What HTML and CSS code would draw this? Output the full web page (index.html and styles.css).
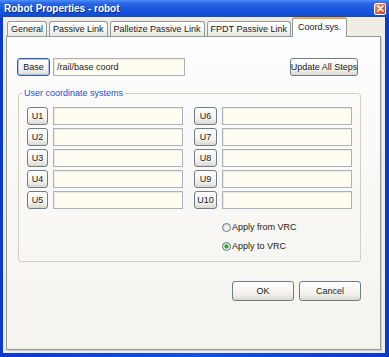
FILE: index.html
```html
<!DOCTYPE html>
<html lang="en">
<head>
  <meta charset="UTF-8" />
  <title>Robot Properties - robot</title>
  <link rel="stylesheet" href="styles.css">
</head>
<body>
  <div class="window">
    <div class="titlebar">
      <span class="title">Robot Properties - robot</span>
      <span class="close">
        <svg width="7" height="7" viewBox="0 0 7 7"><path d="M1 1L6 6M6 1L1 6" stroke="#fff" stroke-width="1.6" stroke-linecap="round"/></svg>
      </span>
    </div>

    <div class="client">
      <!-- Tabs -->
      <div class="tabs">
        <div class="tab">General</div>
        <div class="tab">Passive Link</div>
        <div class="tab">Palletize Passive Link</div>
        <div class="tab">FPDT Passive Link</div>
        <div class="tab active">Coord.sys.</div>
      </div>

      <div class="pane">
        <div class="base-row">
          <button class="btn btn-base">Base</button>
          <div class="field base-field">/rail/base coord</div>
          <button class="btn btn-update"><span>Update All Steps</span></button>
        </div>

        <fieldset class="group">
          <legend>User coordinate systems</legend>
          <div class="ucs-grid">
            <div class="ucs"><button class="btn">U1</button><div class="field"></div></div>
            <div class="ucs"><button class="btn">U2</button><div class="field"></div></div>
            <div class="ucs"><button class="btn">U3</button><div class="field"></div></div>
            <div class="ucs"><button class="btn">U4</button><div class="field"></div></div>
            <div class="ucs"><button class="btn">U5</button><div class="field"></div></div>
            <div class="ucs ucs-right"><button class="btn">U6</button><div class="field"></div></div>
            <div class="ucs ucs-right"><button class="btn">U7</button><div class="field"></div></div>
            <div class="ucs ucs-right"><button class="btn">U8</button><div class="field"></div></div>
            <div class="ucs ucs-right"><button class="btn">U9</button><div class="field"></div></div>
            <div class="ucs ucs-right"><button class="btn">U10</button><div class="field"></div></div>
          </div>
          <div class="radios">
            <div class="radio"><span class="radio-dot"></span>Apply from VRC</div>
            <div class="radio"><span class="radio-dot checked"></span>Apply to VRC</div>
          </div>
        </fieldset>

        <div class="actions">
          <button class="btn">OK</button>
          <button class="btn">Cancel</button>
        </div>
      </div>
    </div>
  </div>
</body>
</html>
```
FILE: styles.css
```css
* { box-sizing: border-box; }
body {
  margin: 0;
  font-family: 'Liberation Sans', Arial, sans-serif;
  font-size: 9px;
  color: #1a1a1a;
  background: #0c43d6;
}
.window {
  width: 389px;
  height: 357px;
  display: flex;
  flex-direction: column;
  background: linear-gradient(90deg, #0a3acb, #1550e0 50%, #0a3acb);
}
.titlebar {
  height: 17px;
  display: flex;
  align-items: center;
  justify-content: space-between;
  padding: 0 3px 0 4px;
  background: linear-gradient(#4f8ef5, #2866e6 20%, #1655da 60%, #0e4bd0);
}
.title {
  color: #fff;
  font-weight: bold;
  font-size: 10px;
  text-shadow: 1px 1px 0 #0b2a8a;
}
.close {
  width: 12px;
  height: 12px;
  border: 1px solid #fff;
  border-radius: 2px;
  background: linear-gradient(135deg, #f4a47f, #e35c2e 55%, #c9421c);
  display: flex;
  align-items: center;
  justify-content: center;
}
.client {
  flex: 1;
  margin: 0 4px 4px 3px;
  padding: 0 4px 3px 3px;
  background: #efede4;
  display: flex;
  flex-direction: column;
}

/* tabs */
.tabs {
  height: 19px;
  display: flex;
  align-items: flex-end;
  gap: 2px;
  padding-left: 1px;
  position: relative;
  z-index: 1;
}
.tab {
  height: 15px;
  padding: 0 3px;
  display: flex;
  align-items: center;
  border: 1px solid #919b9c;
  border-bottom: none;
  border-radius: 3px 3px 0 0;
  background: linear-gradient(#fff, #f4f4f0 60%, #e7e6de);
  white-space: nowrap;
}
.tab.active {
  height: 20px;
  margin: 0 0 -1px -1px;
  padding: 0 5px 3px;
  border-top: 2px solid #f0a63c;
  background: #fcfcfe;
}

/* pane */
.pane {
  flex: 1;
  border: 1px solid #919b9c;
  background: linear-gradient(#fdfdfd, #f4f3ee);
  padding: 21px 19px 0 11px;
  box-shadow: 1px 1px 0 #d2d0c6;
}
.btn {
  font: inherit;
  color: #1a1a1a;
  height: 18px;
  padding: 0;
  border: 1px solid #6f7c89;
  border-radius: 3px;
  background: linear-gradient(#fff, #f3f2ee 65%, #dcd8cd);
  display: flex;
  align-items: center;
  justify-content: center;
  white-space: nowrap;
  overflow: hidden;
}
.field {
  height: 18px;
  border: 1px solid #a9b2bc;
  background: #fffcf1;
  box-shadow: inset 1px 1px 0 #eeeae0;
  display: flex;
  align-items: center;
  padding: 0 3px;
}
.base-row {
  display: flex;
  align-items: center;
  gap: 3px;
}
.btn-base {
  width: 33px;
  margin-left: -1px;
  border-color: #3a5c96;
  box-shadow: inset 0 0 0 1px #a9c4ee;
}
.base-field { width: 132px; }
.btn-update {
  width: 68px;
  margin-left: auto;
  margin-right: 3px;
}

/* group */
.group {
  margin: 12px 0 0;
  padding: 9px 7px 8px 8px;
  border: 1px solid #d2d1c2;
  border-radius: 3px;
}
.group legend {
  padding: 0 2px;
  margin-left: -5px;
  color: #1f4fc6;
}
.ucs-grid {
  display: grid;
  grid-template-columns: 156px 158px;
  grid-template-rows: repeat(5, 18px);
  grid-auto-flow: column;
  column-gap: 11px;
  row-gap: 3px;
}
.ucs { display: flex; gap: 5px; }
.ucs .btn { width: 21px; }
.ucs-right .btn { width: 23px; }
.ucs .field { flex: 1; }
.radios {
  margin: 11px 0 0 195px;
  display: flex;
  flex-direction: column;
  gap: 5px;
}
.radio {
  height: 14px;
  display: flex;
  align-items: center;
  gap: 1px;
}
.radio-dot {
  width: 9px;
  height: 9px;
  border-radius: 50%;
  border: 1px solid #567690;
  background: linear-gradient(135deg, #dcdad2, #fff);
}
.radio-dot.checked {
  background: radial-gradient(circle, #2fa52f 0 1.8px, transparent 2.4px), linear-gradient(135deg, #dcdad2, #fff);
}
.actions {
  display: flex;
  justify-content: flex-end;
  gap: 5px;
  margin-top: 19px;
}
.actions .btn { width: 62px; height: 20px; }
```
